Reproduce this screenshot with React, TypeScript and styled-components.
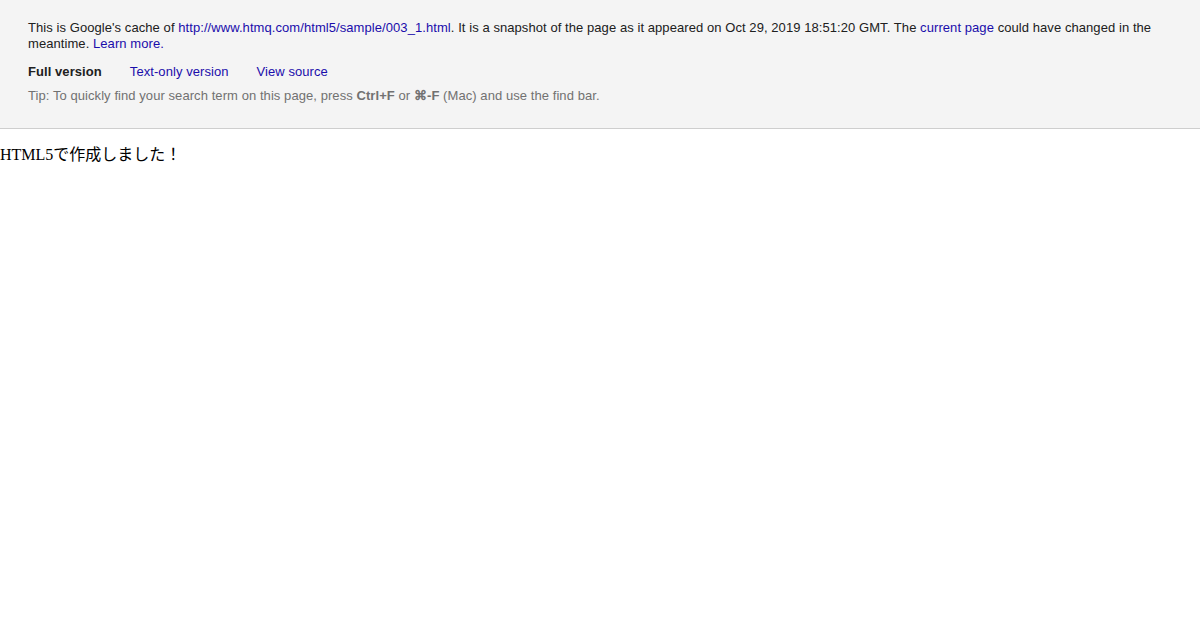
import React from "react";
import styled, { createGlobalStyle } from "styled-components";

const Global = createGlobalStyle`
  html, body { margin: 0; padding: 0; background: #fff; }
  body { font-family: "Liberation Serif", "Noto Sans CJK JP", serif; font-size: 16px; color: #000; }
`;

const Header = styled.div`
  background: #f4f4f4;
  font: 13px "Liberation Sans", Arial, sans-serif;
  letter-spacing: 0.07px;
  color: #202020;
  line-height: 16px;
  padding: 20px 28px 24px 28px;
  border-bottom: 1px solid #cecece;
`;

const Notice = styled.div``;

const Link = styled.a`
  color: #1a0dab;
  text-decoration: none;
`;

const Versions = styled.div`
  display: flex;
  gap: 28px;
  margin-top: 12px;
  white-space: nowrap;
`;

const Current = styled.span`
  font-weight: bold;
`;

const Tip = styled.div`
  margin-top: 8px;
  color: #717171;
  b { font-weight: bold; }
`;

const Content = styled.p`
  margin: 16px 0;
  font-family: "Liberation Serif", "Noto Sans CJK JP", serif;
  font-size: 16px;
  line-height: 19px;
`;

export default function App() {
  return (
    <>
      <Global />
      <Header>
        <Notice>
          This is Google's cache of{" "}
          <Link href="#">http://www.htmq.com/html5/sample/003_1.html</Link>. It is a snapshot of the page as it
          appeared on Oct 29, 2019 18:51:20 GMT. The <Link href="#">current page</Link> could have changed in the
          meantime. <Link href="#">Learn more.</Link>
        </Notice>
        <Versions>
          <Current>Full version</Current>
          <Link href="#">Text-only version</Link>
          <Link href="#">View source</Link>
        </Versions>
        <Tip>
          Tip: To quickly find your search term on this page, press <b>Ctrl+F</b> or <b>⌘-F</b> (Mac) and use the
          find bar.
        </Tip>
      </Header>
      <Content>HTML5で作成しました！</Content>
    </>
  );
}
